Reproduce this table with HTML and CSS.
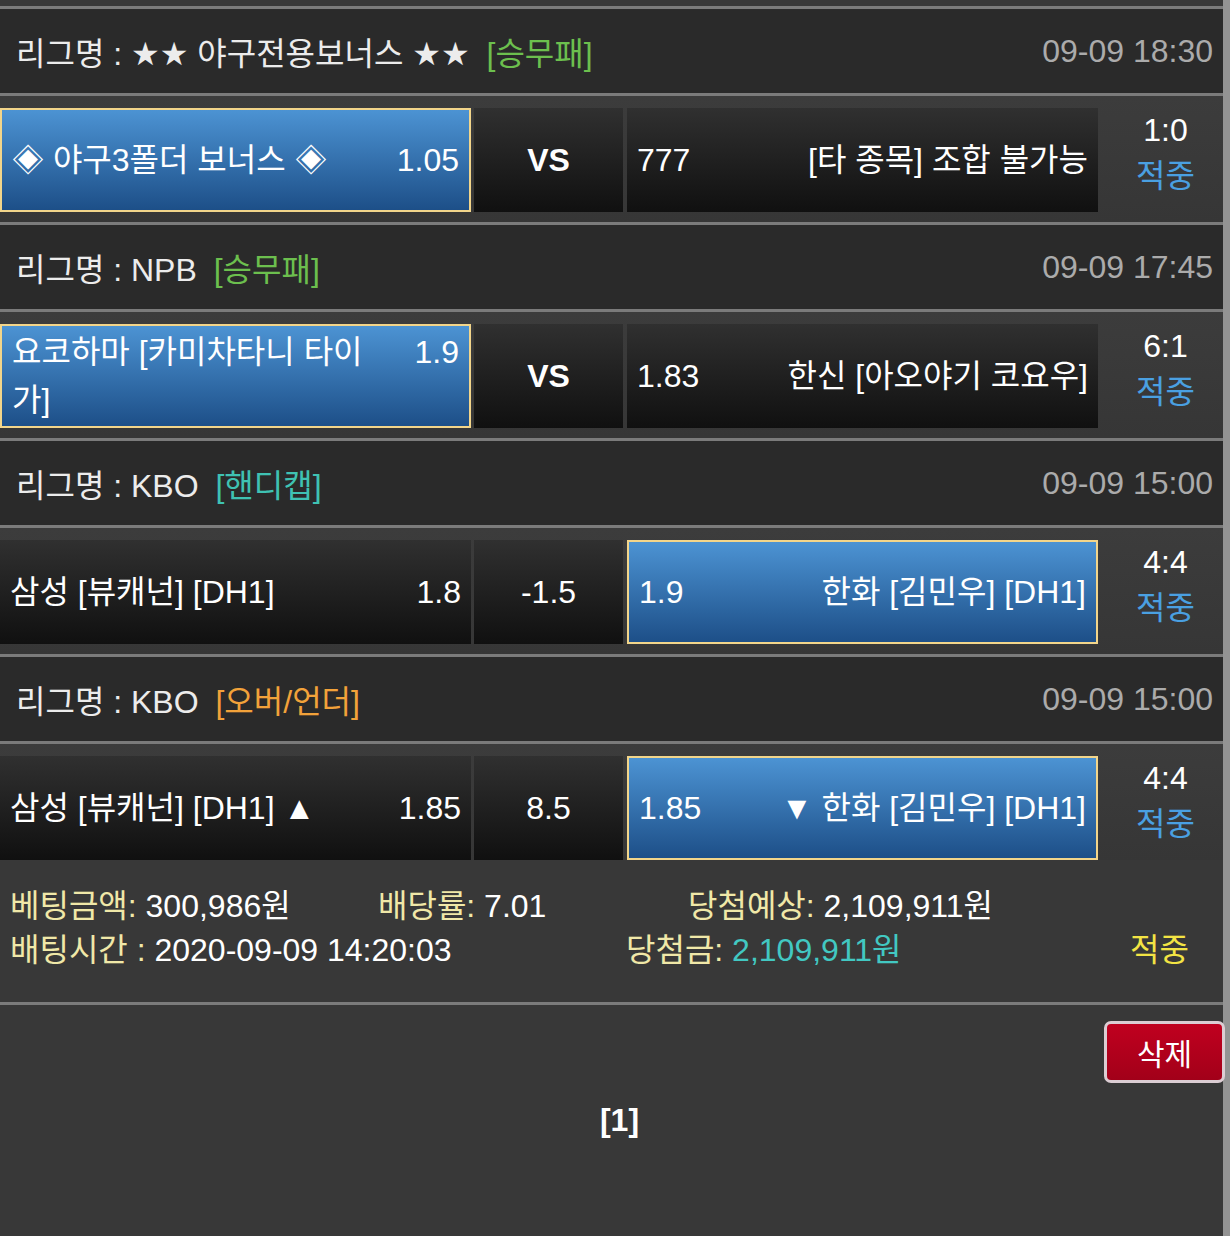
FILE: index.html
```html
<!DOCTYPE html>
<html lang="ko">
<head>
  <meta charset="UTF-8">
  <meta name="viewport" content="width=device-width, initial-scale=1.0">
  <title>배팅내역</title>
  <link rel="stylesheet" href="styles.css">
</head>
<body>
  <div class="wrap">

    <div class="game">
      <div class="league">
        <div class="league-name">리그명 : ★★ 야구전용보너스 ★★ <span class="tag green">[승무패]</span></div>
        <div class="league-time">09-09 18:30</div>
      </div>
      <div class="match">
        <div class="cell home picked">
          <div class="pick"><span class="team">◈ 야구3폴더 보너스 ◈</span><span class="odds">1.05</span></div>
        </div>
        <div class="cell mid vs">VS</div>
        <div class="cell away">
          <div class="pick"><span class="odds">777</span><span class="team">[타 종목] 조합 불가능</span></div>
        </div>
        <div class="result">
          <div>1:0</div>
          <div class="hit">적중</div>
        </div>
      </div>
    </div>

    <div class="game">
      <div class="league">
        <div class="league-name">리그명 : NPB <span class="tag green">[승무패]</span></div>
        <div class="league-time">09-09 17:45</div>
      </div>
      <div class="match">
        <div class="cell home picked">
          <div class="pick"><span class="team">요코하마 [카미차타니 타이가]</span><span class="odds">1.9</span></div>
        </div>
        <div class="cell mid vs">VS</div>
        <div class="cell away">
          <div class="pick"><span class="odds">1.83</span><span class="team">한신 [아오야기 코요우]</span></div>
        </div>
        <div class="result">
          <div>6:1</div>
          <div class="hit">적중</div>
        </div>
      </div>
    </div>

    <div class="game">
      <div class="league">
        <div class="league-name">리그명 : KBO <span class="tag teal">[핸디캡]</span></div>
        <div class="league-time">09-09 15:00</div>
      </div>
      <div class="match">
        <div class="cell home">
          <div class="pick"><span class="team">삼성 [뷰캐넌] [DH1]</span><span class="odds">1.8</span></div>
        </div>
        <div class="cell mid">-1.5</div>
        <div class="cell away picked">
          <div class="pick"><span class="odds">1.9</span><span class="team">한화 [김민우] [DH1]</span></div>
        </div>
        <div class="result">
          <div>4:4</div>
          <div class="hit">적중</div>
        </div>
      </div>
    </div>

    <div class="game">
      <div class="league">
        <div class="league-name">리그명 : KBO <span class="tag orange">[오버/언더]</span></div>
        <div class="league-time">09-09 15:00</div>
      </div>
      <div class="match match-last">
        <div class="cell home">
          <div class="pick"><span class="team">삼성 [뷰캐넌] [DH1] ▲</span><span class="odds">1.85</span></div>
        </div>
        <div class="cell mid">8.5</div>
        <div class="cell away picked">
          <div class="pick"><span class="odds">1.85</span><span class="team">▼ 한화 [김민우] [DH1]</span></div>
        </div>
        <div class="result">
          <div>4:4</div>
          <div class="hit">적중</div>
        </div>
      </div>
    </div>

    <div class="summary">
      <div class="sum-row first">
        <div><span class="label">베팅금액:</span> 300,986원</div>
        <div><span class="label">배당률:</span> 7.01</div>
        <div><span class="label">당첨예상:</span> 2,109,911원</div>
      </div>
      <div class="sum-row second">
        <div><span class="label">배팅시간 :</span> 2020-09-09 14:20:03</div>
        <div><span class="label">당첨금:</span> <span class="win">2,109,911원</span></div>
        <div class="win-state">적중</div>
      </div>
    </div>

    <div class="foot">
      <div class="foot-actions">
        <button class="btn-del" type="button">삭제</button>
      </div>
      <div class="paging">[1]</div>
    </div>

  </div>
</body>
</html>
```

FILE: styles.css
```css
body {
  margin: 0;
  padding: 0;
  background-color: #939393;
  font-family: 'Liberation Sans', 'Noto Sans CJK KR', sans-serif;
  font-size: 32px;
  color: #fff;
}

.wrap {
  width: 1223px;
  min-height: 100vh;
  padding-top: 6px;
  box-sizing: border-box;
  background-color: #383838;
}

.game {
  border-top: 3px solid #7b7b7b;
}

/* league header */
.league {
  display: flex;
  justify-content: space-between;
  align-items: center;
  height: 84px;
  padding: 0 10px 0 16px;
  background-color: #2a2a2a;
  border-bottom: 3px solid #7b7b7b;
}

.league-name {
  font-family: 'Liberation Sans', 'DejaVu Sans', 'Noto Sans CJK KR', sans-serif;
  color: #ececec;
}

.league-time {
  color: #ababab;
}

.tag {
  margin-left: 8px;
}

.tag.green { color: #6cbf4e; }
.tag.teal { color: #3fc2b3; }
.tag.orange { color: #f2a23a; }

/* match row */
.match {
  display: flex;
  height: 104px;
  padding: 12px 0 10px;
  background: linear-gradient(to bottom, #3c3c3c, #363636);
}

.match-last {
  padding-bottom: 0;
}

.cell {
  display: flex;
  align-items: center;
  height: 104px;
  padding: 0 10px;
  box-sizing: border-box;
  background: linear-gradient(to bottom, #303030, #101010);
  line-height: 48px;
}

.cell.home {
  width: 471px;
  margin-right: 3px;
}

.cell.mid {
  width: 149px;
  margin-right: 4px;
  justify-content: center;
}

.cell.away {
  width: 471px;
}

.cell.picked {
  border: 2px solid #f2d58a;
  background: linear-gradient(to bottom, #4c93d3, #1d4f88);
}

.vs {
  font-weight: bold;
}

.pick {
  display: flex;
  align-items: flex-start;
  width: 100%;
}

.home .team {
  flex: 1;
}

.home .odds {
  margin-left: 24px;
}

.away .odds {
  margin-right: 24px;
}

.away .team {
  flex: 1;
  text-align: right;
}

.result {
  flex: 1;
  display: flex;
  flex-direction: column;
  justify-content: center;
  align-items: center;
  height: 104px;
  padding: 0 0 14px 10px;
  box-sizing: border-box;
  line-height: 46px;
}

.hit {
  color: #4aa0e2;
}

/* summary */
.summary {
  padding: 24px 0 30px 10px;
  line-height: 44px;
  border-bottom: 3px solid #7b7b7b;
}

.sum-row {
  display: grid;
}

.sum-row.first {
  grid-template-columns: 368px 310px auto;
}

.sum-row.second {
  grid-template-columns: 616px 504px auto;
}

.label {
  color: #f0e8a8;
}

.win {
  color: #42c8c2;
}

.win-state {
  color: #f3e444;
}

/* footer */
.foot {
  padding-top: 16px;
}

.foot-actions {
  display: flex;
  justify-content: flex-end;
}

.btn-del {
  width: 121px;
  height: 62px;
  margin-right: -2px;
  border: 3px solid #dccdd3;
  border-radius: 7px;
  background: linear-gradient(to bottom, #c0001f, #a20019);
  color: #fff;
  font-family: inherit;
  font-size: 30px;
  cursor: pointer;
}

.paging {
  margin-top: 13px;
  padding-left: 16px;
  text-align: center;
  font-weight: bold;
  line-height: 48px;
}
```
